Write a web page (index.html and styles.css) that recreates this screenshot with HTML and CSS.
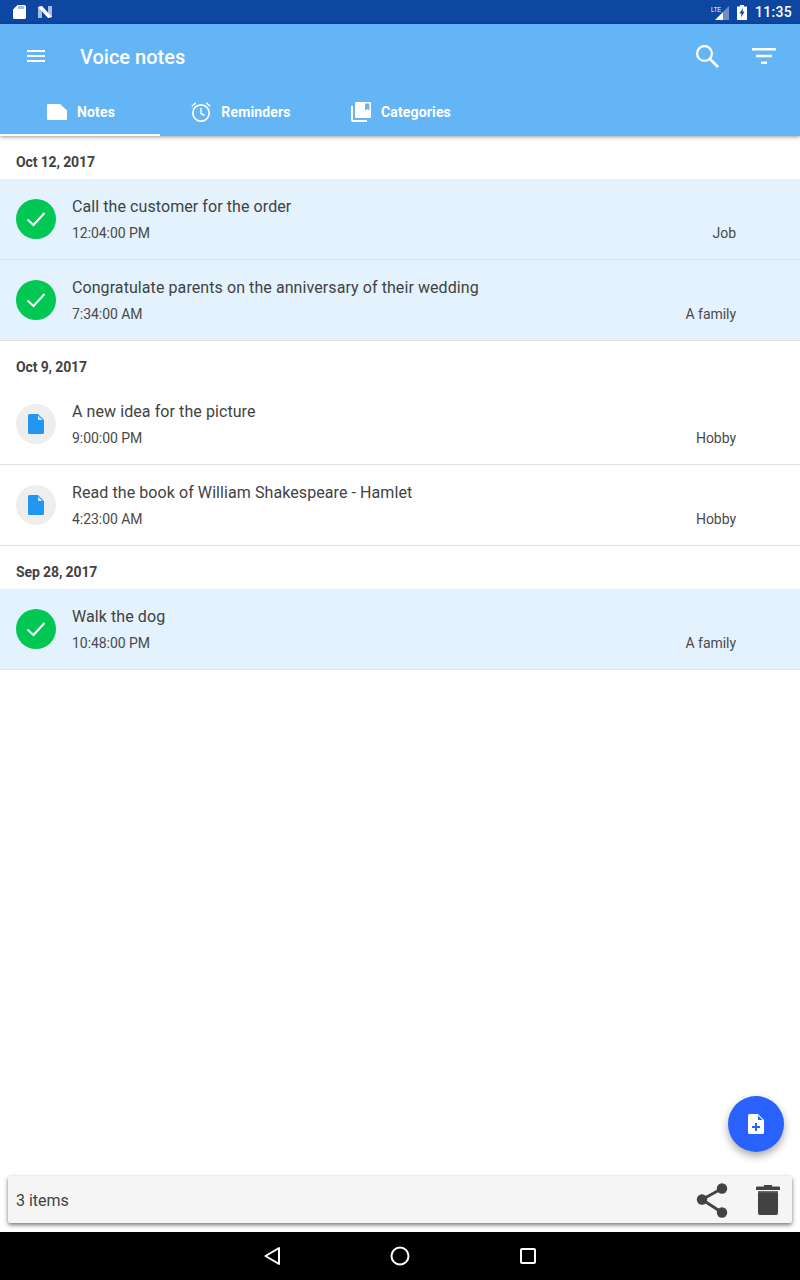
FILE: index.html
```html
<!DOCTYPE html>
<html>
<head>
    <meta charset="utf-8">
    <meta name="viewport" content="width=device-width, initial-scale=1">
    <title>Voice notes</title>
    <link rel="stylesheet" href="styles.css">
</head>
<body>
<div class="screen">

    <div class="statusbar">
        <div class="status-left">
            <svg width="13" height="14" viewBox="0 0 13 14"><path fill="#fff" d="M4.500 0h7A1.500 1.500 0 0 1 13 1.500v11a1.500 1.500 0 0 1-1.500 1.500h-10A1.500 1.500 0 0 1 0 12.500V4.500z"/><path fill="#0d47a1" d="M5.500 1h1v3h-1zM7.500 1h1v3h-1zM9.500 1h1v3h-1z" opacity=".7"/></svg>
            <svg width="14" height="12" viewBox="0 0 14 12"><path fill="#a9bfdf" d="M0 1l4-1v12H0zM10 0h4v11l-4 1z"/><path fill="#fff" d="M0 1l4-1 10 11-4 1z"/></svg>
        </div>
        <div class="status-right">
            <svg class="signal" width="20" height="16" viewBox="0 0 20 16"><path fill="#6f8fc4" d="M20 2v14h-6V8z"/><path fill="#fff" d="M14 8v8H6z"/><text x="2" y="8" class="lte" textLength="10" lengthAdjust="spacingAndGlyphs">LTE</text></svg>
            <svg width="10" height="15" viewBox="0 0 10 15"><path fill="#fff" d="M3 0h4v1.500h3V15H0V1.500h3z"/><path fill="#0d47a1" d="M5.800 3L2.500 8.500h2L4 12.500l3.500-6h-2z"/></svg>
            <span class="clock">11:35</span>
        </div>
    </div>

    <div class="header">
        <div class="toolbar">
            <svg class="menu-icon" width="18" height="12" viewBox="0 0 18 12"><path fill="#fff" d="M0 0h18v2H0zM0 5h18v2H0zM0 10h18v2H0z"/></svg>
            <div class="title">Voice notes</div>
            <svg class="search-icon" width="23" height="23" viewBox="0 0 23 23"><circle cx="8.500" cy="8.500" r="7.400" fill="none" stroke="#fff" stroke-width="2.200"/><path stroke="#fff" stroke-width="2.600" d="M13.500 13.500l8.500 8.500"/></svg>
            <svg class="filter-icon" width="24" height="16" viewBox="0 0 24 16"><path fill="#fff" d="M0 0h24v2.400H0zM4 6.800h16v2.400H4zM9 13.500h6V16H9z"/></svg>
        </div>
        <div class="tabs">
            <div class="tab tab-active">
                <svg width="20" height="16" viewBox="0 0 20 16"><path fill="#fff" d="M1 0h12l7 6.500V15a1 1 0 0 1-1 1H1a1 1 0 0 1-1-1V1a1 1 0 0 1 1-1z"/></svg>
                <span>Notes</span>
            </div>
            <div class="tab">
                <svg width="20" height="20" viewBox="0 0 20 20"><circle cx="10" cy="11" r="8.200" fill="none" stroke="#fff" stroke-width="1.700"/><path fill="none" stroke="#fff" stroke-width="1.500" d="M10 6v5.500l3.500 2M.8 4.300L4.800.9M19.200 4.300L15.200.9"/></svg>
                <span>Reminders</span>
            </div>
            <div class="tab">
                <svg width="20" height="20" viewBox="0 0 20 20"><path fill="#fff" d="M0 4h2v14h14v2H2a2 2 0 0 1-2-2z"/><path fill="#fff" fill-rule="evenodd" d="M5 0h14a1 1 0 0 1 1 1v14a1 1 0 0 1-1 1H5a1 1 0 0 1-1-1V1a1 1 0 0 1 1-1zm9 1.500v7l2.200-1.600 2.200 1.600v-7z"/></svg>
                <span>Categories</span>
            </div>
        </div>
    </div>

    <div class="list">
        <div class="date">Oct 12, 2017</div>
        <div class="row done">
            <div class="badge badge-done"><svg width="20" height="16" viewBox="0 0 20 16"><path fill="none" stroke="#fff" stroke-width="2" d="M1.500 8.500l6 5.500L18.500 2"/></svg></div>
            <div class="row-text">
                <div class="row-title">Call the customer for the order</div>
                <div class="row-meta"><span>12:04:00 PM</span><span>Job</span></div>
            </div>
        </div>
        <div class="row done">
            <div class="badge badge-done"><svg width="20" height="16" viewBox="0 0 20 16"><path fill="none" stroke="#fff" stroke-width="2" d="M1.500 8.500l6 5.500L18.500 2"/></svg></div>
            <div class="row-text">
                <div class="row-title">Congratulate parents on the anniversary of their wedding</div>
                <div class="row-meta"><span>7:34:00 AM</span><span>A family</span></div>
            </div>
        </div>

        <div class="date">Oct 9, 2017</div>
        <div class="row">
            <div class="badge badge-note"><svg width="16" height="20" viewBox="0 0 16 20"><path fill="#2196f3" d="M1.500 0H10l6 6v12.500a1.500 1.500 0 0 1-1.500 1.500h-13A1.500 1.500 0 0 1 0 18.500v-17A1.500 1.500 0 0 1 1.500 0z"/><path fill="#cfe6fb" d="M10 1.500L14.500 6H10z"/></svg></div>
            <div class="row-text">
                <div class="row-title">A new idea for the picture</div>
                <div class="row-meta"><span>9:00:00 PM</span><span>Hobby</span></div>
            </div>
        </div>
        <div class="row">
            <div class="badge badge-note"><svg width="16" height="20" viewBox="0 0 16 20"><path fill="#2196f3" d="M1.500 0H10l6 6v12.500a1.500 1.500 0 0 1-1.500 1.500h-13A1.500 1.500 0 0 1 0 18.500v-17A1.500 1.500 0 0 1 1.500 0z"/><path fill="#cfe6fb" d="M10 1.500L14.500 6H10z"/></svg></div>
            <div class="row-text">
                <div class="row-title">Read the book of William Shakespeare - Hamlet</div>
                <div class="row-meta"><span>4:23:00 AM</span><span>Hobby</span></div>
            </div>
        </div>

        <div class="date">Sep 28, 2017</div>
        <div class="row done">
            <div class="badge badge-done"><svg width="20" height="16" viewBox="0 0 20 16"><path fill="none" stroke="#fff" stroke-width="2" d="M1.500 8.500l6 5.500L18.500 2"/></svg></div>
            <div class="row-text">
                <div class="row-title">Walk the dog</div>
                <div class="row-meta"><span>10:48:00 PM</span><span>A family</span></div>
            </div>
        </div>
    </div>

    <div class="fab">
        <svg width="16" height="20" viewBox="0 0 16 20"><path fill="#fff" d="M1.500 0H10l6 6v12.500a1.500 1.500 0 0 1-1.500 1.500h-13A1.500 1.500 0 0 1 0 18.500v-17A1.500 1.500 0 0 1 1.500 0z"/><path fill="#2962ff" d="M7 9h2v3h3v2H9v3H7v-3H4v-2h3zM10 1.500L14.500 6H10z"/></svg>
    </div>

    <div class="actionbar-wrap">
        <div class="actionbar">
            <span class="count">3 items</span>
            <svg class="share-icon" width="32" height="36" viewBox="0 0 32 36"><path fill="none" stroke="#424242" stroke-width="2.800" d="M26 6.500L6 17.500l20 13"/><circle cx="26" cy="6.500" r="5.200" fill="#424242"/><circle cx="6" cy="17.500" r="5.200" fill="#424242"/><circle cx="26" cy="30.500" r="5.200" fill="#424242"/></svg>
            <svg class="trash-icon" width="24" height="30" viewBox="0 0 24 30"><path fill="#424242" d="M8 0h8v1.500h7a1 1 0 0 1 1 1V5H0V2.500a1 1 0 0 1 1-1h7zM2 6h20v22a2 2 0 0 1-2 2H4a2 2 0 0 1-2-2z"/><path fill="#6a6a6a" d="M2 6h20v1.500H2z"/></svg>
        </div>
    </div>

    <div class="navbar">
        <svg width="20" height="20" viewBox="0 0 20 20"><path fill="none" stroke="#fff" stroke-width="2" stroke-linejoin="round" d="M17 2v16L3.500 10z"/></svg>
        <svg width="20" height="20" viewBox="0 0 20 20"><circle cx="10" cy="10" r="8.500" fill="none" stroke="#fff" stroke-width="2"/></svg>
        <svg width="20" height="20" viewBox="0 0 20 20"><rect x="3" y="3" width="14" height="14" rx="1" fill="none" stroke="#fff" stroke-width="2"/></svg>
    </div>

</div>
</body>
</html>
```

FILE: styles.css
```css
html, body {
    margin: 0;
    padding: 0;
    background-color: #fff;
    font-family: Roboto, sans-serif;
    color: #424242;
}

.screen {
    position: relative;
    width: 800px;
    height: 1280px;
    display: flex;
    flex-direction: column;
    overflow: hidden;
}

/* status bar */
.statusbar {
    height: 24px;
    flex: none;
    background-color: #0d47a1;
    display: flex;
    justify-content: space-between;
    align-items: center;
    padding: 0 8px 0 13px;
}

.status-left {
    display: flex;
    align-items: center;
    gap: 12px;
}

.status-right {
    display: flex;
    align-items: center;
    gap: 8px;
}

.signal {
    margin-top: -1px;
}

.lte {
    font-family: "Liberation Sans", sans-serif;
    font-size: 8px;
    fill: #fff;
}

.clock {
    color: #fff;
    font-size: 14px;
    font-weight: 500;
    letter-spacing: 0.3px;
}

/* header */
.header {
    flex: none;
    height: 112px;
    background-color: #64b5f6;
    box-shadow: 0 1px 4px rgba(0, 0, 0, 0.4);
    position: relative;
    z-index: 1;
}

.toolbar {
    height: 64px;
    display: flex;
    align-items: center;
    padding-left: 27px;
}

.title {
    color: #fff;
    font-size: 20px;
    font-weight: 500;
    margin-left: 35px;
    padding-top: 2px;
    flex: 1;
}

.search-icon {
    margin-right: 33px;
}

.filter-icon {
    margin-right: 24px;
}

.tabs {
    display: flex;
    height: 48px;
}

.tab {
    width: 160px;
    height: 48px;
    box-sizing: border-box;
    padding-left: 2px;
    display: flex;
    justify-content: center;
    align-items: center;
    gap: 10px;
    color: #fff;
    font-size: 14px;
    font-weight: 700;
    letter-spacing: 0.15px;
}

.tab-active {
    box-shadow: inset 0 -2px 0 #fff;
}

/* list */
.list {
    flex: 1;
}

.date {
    height: 43px;
    box-sizing: border-box;
    padding: 17px 16px 0;
    font-size: 14px;
    line-height: 18px;
    font-weight: 700;
    letter-spacing: -0.12px;
}

.row {
    height: 81px;
    box-sizing: border-box;
    border-bottom: 1px solid #e0e0e0;
    display: flex;
    align-items: center;
    padding: 0 64px 0 16px;
}

.done {
    background-color: #e3f2fd;
}

.badge {
    width: 40px;
    height: 40px;
    flex: none;
    border-radius: 50%;
    display: flex;
    justify-content: center;
    align-items: center;
    margin-right: 16px;
}

.badge-done {
    background-color: #00c853;
}

.badge-note {
    background-color: #eeeeee;
}

.row-text {
    flex: 1;
    padding-bottom: 1px;
}

.row-title {
    font-size: 16px;
    line-height: 22px;
    letter-spacing: 0.08px;
}

.row-meta {
    display: flex;
    justify-content: space-between;
    font-size: 14px;
    line-height: 18px;
    margin-top: 6px;
    letter-spacing: -0.05px;
    color: #4a4a4a;
}

/* floating button */
.fab {
    position: absolute;
    left: 728px;
    top: 1096px;
    width: 56px;
    height: 56px;
    border-radius: 50%;
    background-color: #2962ff;
    box-shadow: 0 4px 8px rgba(0, 0, 0, 0.35);
    display: flex;
    justify-content: center;
    align-items: center;
}

/* bottom action bar */
.actionbar-wrap {
    flex: none;
    padding: 0 8px 9px;
}

.actionbar {
    height: 47px;
    background-color: #f5f5f5;
    border-radius: 2px;
    box-shadow: 0 2px 4px rgba(0, 0, 0, 0.55);
    display: flex;
    align-items: center;
    padding: 0 12px 0 8px;
}

.count {
    font-size: 16px;
    flex: 1;
    padding-top: 2px;
}

.share-icon {
    margin-right: 28px;
}

/* nav bar */
.navbar {
    flex: none;
    height: 48px;
    background-color: #000;
    display: flex;
    justify-content: center;
    align-items: center;
    gap: 108px;
}
```
